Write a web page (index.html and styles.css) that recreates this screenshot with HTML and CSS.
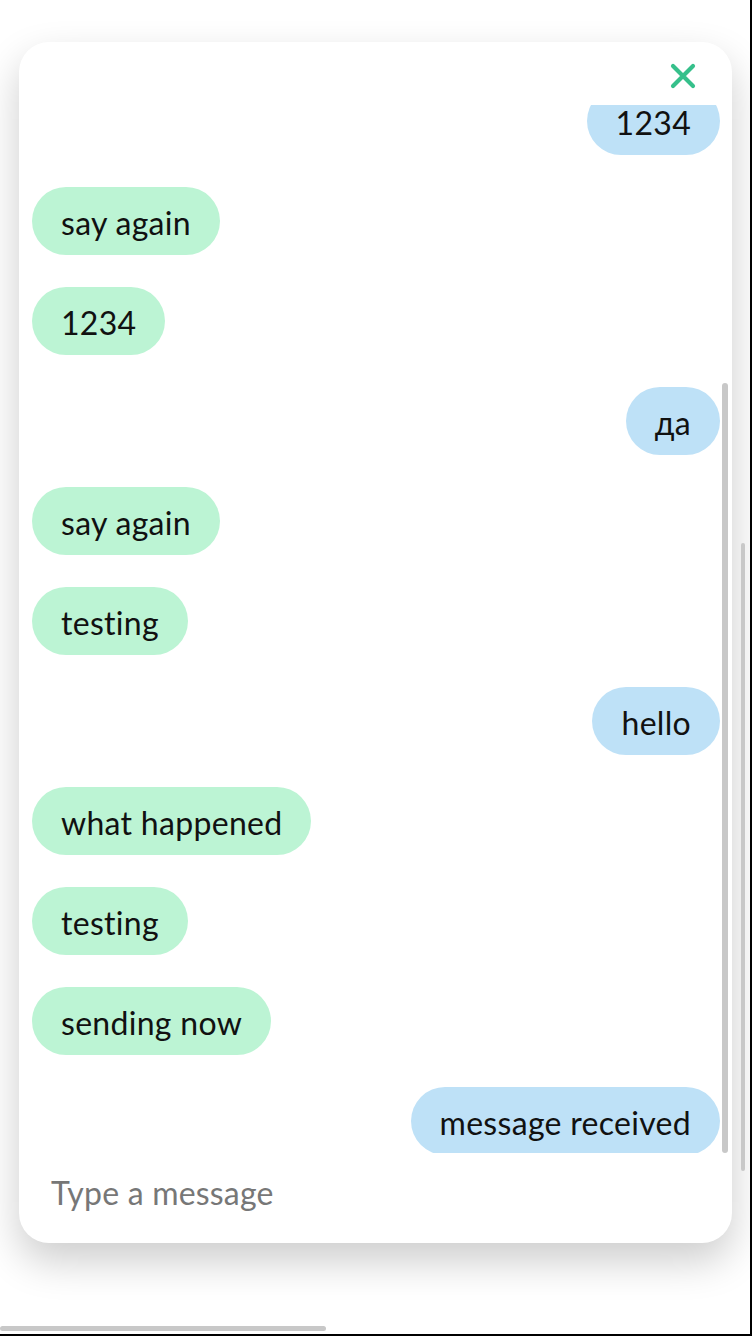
FILE: index.html
```html
<!DOCTYPE html>
<html lang="en">
<head>
<meta charset="utf-8">
<title>Chat</title>
<link rel="stylesheet" href="styles.css">
</head>
<body>
<div class="panel">
  <div class="header">
    <button class="close" aria-label="Close">
      <svg width="26" height="26" viewBox="0 0 26 26"><path d="M3 3 L23 23 M23 3 L3 23" stroke="#36c08b" stroke-width="4.2" stroke-linecap="round" fill="none"/></svg>
    </button>
  </div>
  <div class="messages">
    <div class="list">
      <div class="bubble out">1234</div>
      <div class="bubble in">say again</div>
      <div class="bubble in">1234</div>
      <div class="bubble out">да</div>
      <div class="bubble in">say again</div>
      <div class="bubble in">testing</div>
      <div class="bubble out">hello</div>
      <div class="bubble in">what happened</div>
      <div class="bubble in">testing</div>
      <div class="bubble in">sending now</div>
      <div class="bubble out">message received</div>
    </div>
  </div>
  <div class="composer">
    <input class="input" type="text" placeholder="Type a message">
  </div>
</div>
<div class="chat-scroll"></div>
<div class="page-scroll-v"></div>
<div class="page-scroll-h"></div>
</body>
</html>
```
FILE: styles.css
```css
html {
  background: #000;
  margin: 0;
  padding: 0;
}
body {
  margin: 0;
  width: 750px;
  height: 1334px;
  background: #fff;
  overflow: hidden;
  position: relative;
  font-family: "Lato", "Noto Sans", sans-serif;
  font-variant-ligatures: none;
  padding-top: 42px;
  box-sizing: border-box;
}
.panel {
  margin-left: 19px;
  width: 713px;
  height: 1201px;
  border-radius: 30px;
  background: #fff;
  box-shadow: 0 18px 40px rgba(0, 0, 0, 0.2);
  display: flex;
  flex-direction: column;
  overflow: hidden;
}
.header {
  height: 63px;
  flex: none;
  display: flex;
  justify-content: flex-end;
  align-items: flex-start;
  padding: 21px 36px 0 0;
  box-sizing: border-box;
}
.close {
  border: none;
  background: none;
  padding: 0;
  width: 26px;
  height: 26px;
  display: block;
}
.close svg { display: block; }
.messages {
  height: 1048px;
  flex: none;
  padding: 0 12px 0 13px;
  overflow-y: auto;
  scrollbar-width: none;
  display: flex;
  flex-direction: column-reverse;
}
.messages::-webkit-scrollbar {
  display: none;
}
.list {
  display: flex;
  flex-direction: column;
  gap: 32px;
  margin-bottom: -2px;
}
.bubble {
  height: 68px;
  border-radius: 34px;
  padding: 3px 29px 0;
  box-sizing: border-box;
  display: flex;
  align-items: center;
  font-size: 32px;
  letter-spacing: 0.3px;
  color: #111;
  flex: none;
  white-space: nowrap;
}
.bubble.in {
  align-self: flex-start;
  background: #bcf4d4;
}
.bubble.out {
  align-self: flex-end;
  background: #bee1f7;
}
.composer {
  flex: 1;
  padding: 19px 32px 0;
  box-sizing: border-box;
}
.input {
  width: 100%;
  height: 40px;
  border: none;
  outline: none;
  padding: 0;
  background: transparent;
  font-family: "Lato", "Noto Sans", sans-serif;
  font-size: 32px;
  letter-spacing: 0.2px;
  color: #222;
}
.input::placeholder {
  color: #777;
}
.chat-scroll {
  position: absolute;
  left: 722px;
  top: 383px;
  width: 6px;
  height: 770px;
  border-radius: 3px;
  background: #c8c8c8;
}
.page-scroll-v {
  position: absolute;
  left: 741px;
  top: 543px;
  width: 4px;
  height: 628px;
  border-radius: 3px;
  background: #c8c8c8;
}
.page-scroll-h {
  position: absolute;
  left: 0;
  top: 1326px;
  width: 326px;
  height: 5px;
  border-radius: 3px;
  background: #c8c8c8;
}
```
